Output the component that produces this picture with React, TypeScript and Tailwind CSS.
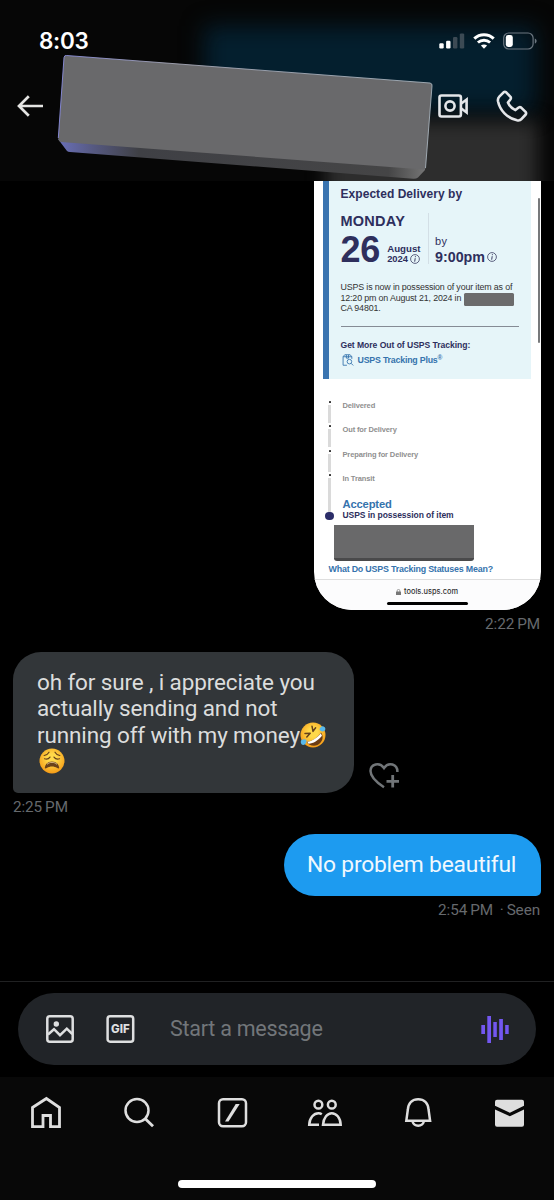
import type { ReactNode } from "react";

const STEPS = ["Delivered", "Out for Delivery", "Preparing for Delivery", "In Transit"];

function StatusBar() {
  return (
    <div className="relative flex h-[81px] items-center justify-between pl-[39px] pr-[17px]">
      <span className="font-['Inter'] text-[22.5px] leading-7 font-semibold tracking-[-0.3px] text-white">8:03</span>
      <div className="flex items-center">
        <svg className="h-4 w-[26px]" viewBox="0 0 26 16">
          <rect x="0.3" y="10.3" width="4.4" height="5.2" rx="1.2" fill="#fff" />
          <rect x="7.1" y="7.8" width="4.4" height="7.7" rx="1.2" fill="#fff" />
          <rect x="14" y="4" width="4.4" height="11.5" rx="1.2" fill="#3c4a54" />
          <rect x="20.8" y="0.4" width="4.4" height="15.1" rx="1.2" fill="#3c4a54" />
        </svg>
        <svg className="ml-2 h-4 w-[22px]" viewBox="0 0 22 16" fill="none" stroke="#fff">
          <path d="M1.3 5.6C6.8.5 15.2.5 20.7 5.6" strokeWidth="3.1" />
          <path d="M4.9 9.5C8.4 6.4 13.6 6.4 17.1 9.5" strokeWidth="2.9" />
          <path d="M11 15.8 7.9 12.6c1.8-1.6 4.4-1.6 6.2 0Z" fill="#fff" stroke="none" />
        </svg>
        <svg className="ml-[8px] h-[18px] w-[34px]" viewBox="0 0 34 18">
          <rect x="0.7" y="1" width="29.4" height="16" rx="5" fill="none" stroke="#6c7780" strokeWidth="1.2" />
          <rect x="2.8" y="3.1" width="7" height="11.8" rx="2.4" fill="#fff" />
          <path d="M31.8 6.4c2.4.9 2.4 4.3 0 5.2Z" fill="#6c7780" />
        </svg>
      </div>
    </div>
  );
}

function RedactedName() {
  return (
    <svg className="absolute top-[52px] left-[54px] h-[129px] w-[382px]" viewBox="54 52 382 129">
      <defs>
        <linearGradient id="edge" x1="0" x2="1">
          <stop offset="0" stopColor="#6a70b8" />
          <stop offset="0.1" stopColor="#55587f" />
          <stop offset="0.22" stopColor="#3f4045" />
          <stop offset="0.9" stopColor="#454546" />
          <stop offset="1" stopColor="#747474" />
        </linearGradient>
        <linearGradient id="rim" x1="0" x2="1">
          <stop offset="0" stopColor="#8a8de0" />
          <stop offset="0.3" stopColor="#a3a5b4" />
          <stop offset="1" stopColor="#a7b2bb" />
        </linearGradient>
      </defs>
      <path d="M58 139 67 151Q68 152 70 152L413 178.7Q416 179 418 177.5L425 170 425 160Z" fill="url(#edge)" />
      <path d="M66.5 55.5 430 83Q432.5 83.5 432 86L425.5 168.5Q425 169.8 423 169.5L61 142Q58 141 58.3 138L64 57.5Q64.5 55 66.5 55.5Z" fill="#69696b" />
      <path d="M58.3 138 64 57.5Q64.5 55 66.5 55.5L430 83Q432.5 83.5 432 86L425.5 168" fill="none" stroke="url(#rim)" strokeWidth="0.9" />
    </svg>
  );
}

function Header() {
  return (
    <header className="relative h-[181px] shrink-0 overflow-hidden bg-[#060606]">
      <div className="absolute top-[26px] left-[204px] h-[86px] w-[332px] bg-[#041f2e] blur-[11px]" />
      <div className="absolute top-[121px] left-[326px] h-[90px] w-[212px] bg-[#2d2d2d] blur-[9px]" />
      <StatusBar />
      <div className="relative flex h-[50px] items-center pr-[26px] pl-[17px]">
        <svg className="h-[22px] w-[26px]" viewBox="0 0 26 22" fill="none" stroke="#e4e4e2" strokeWidth="2.7">
          <path d="M26 11H2.5M11.8 1.2 2 11l9.8 9.8" />
        </svg>
        <svg className="ml-auto h-6 w-[30px]" viewBox="0 0 30 24" fill="none" stroke="#e4e6e9" strokeWidth="2.6">
          <rect x="1.5" y="1.5" width="21.4" height="21" rx="2" />
          <circle cx="12" cy="12" r="4.6" />
          <path d="M23 9.7 28.6 5.5v13L23 14.3" />
        </svg>
        <svg className="ml-[28px] h-[32px] w-[32px]" viewBox="0 0 32 32" fill="none" stroke="#e4e6e9" strokeWidth="2.6" strokeLinejoin="round">
          <path d="M3.3 6.7 7.8 2.2Q9 1.4 10.2 2.3L14.5 6.8Q15.3 8 14.5 9.2L11.9 12.6C13.5 16.3 15.7 18.5 19.4 20.1L22.7 17.5Q24 16.7 25.2 17.6L29.8 22.1Q30.5 23.3 29.7 24.5L25.4 29.2C24.3 30.5 22.5 30.6 21 30.3 11 28 4 20.5 2 11.2 1.7 9.5 2 8 3.3 6.7Z" />
        </svg>
      </div>
      <RedactedName />
    </header>
  );
}

function Info() {
  return (
    <svg className="inline-block h-[10px] w-[10px] shrink-0" viewBox="0 0 10 10" fill="none" stroke="#3b3d62">
      <circle cx="5" cy="5" r="4.4" strokeWidth="0.8" />
      <path d="M5.4 2.2v1M5.2 4.2 4.7 7.7" strokeWidth="1" />
    </svg>
  );
}

function TrackingCard() {
  return (
    <div className="mr-[13.5px] flex h-[429px] w-[227px] flex-col self-end overflow-hidden rounded-b-[38px] bg-white font-['Liberation_Sans',sans-serif] whitespace-nowrap text-[#2e2f5d]">
      <div className="flex h-[197.5px] shrink-0">
        <div className="ml-[9px] flex-1 border-l-[6px] border-[#3a74b0] bg-[#e6f5f9] pt-[5px] pl-[12px]">
          <div className="text-[12px] leading-4 font-bold tracking-[0.05px]">Expected Delivery by</div>
          <div className="mt-[11px] flex h-[51px]">
            <div className="w-[88.5px] border-r border-[#d3dfe6]">
              <div className="text-[14.5px] leading-4 font-bold tracking-[0.25px]">MONDAY</div>
              <div className="mt-[5px] flex items-end">
                <span className="text-[36px] leading-8 font-bold tracking-[-0.2px]">26</span>
                <div className="ml-[7px] pb-[2.4px] text-[9.7px] leading-[10px] font-bold">
                  <div>August</div>
                  <div className="flex gap-[2px] text-[9.4px]">2024<Info /></div>
                </div>
              </div>
            </div>
            <div className="pt-[22px] pl-[6px]">
              <div className="text-[11px] leading-3 tracking-[0.3px]">by</div>
              <div className="mt-[1px] flex items-center gap-[2px] text-[14.3px] leading-[18px] font-bold">9:00pm<Info /></div>
            </div>
          </div>
          <div className="mt-[18.3px] text-[8.9px] leading-[10.3px] tracking-[-0.155px] text-[#333]">
            <div>USPS is now in possession of your item as of</div>
            <div className="flex">12:20 pm on August 21, 2024 in<span className="ml-[3px] h-[13px] w-[50px] rounded-[1.5px] bg-[#6b6b6c]" /></div>
            <div className="-mt-[2.7px]">CA 94801.</div>
          </div>
          <div className="mt-[12.5px] h-px w-[178.5px] bg-[#858b95]" />
          <div className="mt-[12.5px] text-[8.6px] leading-3 font-bold tracking-[-0.05px]">Get More Out of USPS Tracking:</div>
          <div className="mt-[3px] flex items-center text-[8.8px] leading-3 font-bold tracking-[-0.2px] text-[#3573ad]">
            <svg className="mr-[4px] ml-[1px] h-[12px] w-[12px]" viewBox="0 0 11 11" fill="none" stroke="#3573ad" strokeWidth="0.8">
              <path d="M4.5 10.3H1V2.5L2.5.7h5L9 2.5v2M1 2.5h8M4 .8v3h2v-3" />
              <circle cx="6.8" cy="7" r="2.1" />
              <path d="m8.3 8.5 2 2" />
            </svg>
            USPS Tracking Plus<span className="-mt-[4px] text-[6.5px]">®</span>
          </div>
        </div>
        <div className="w-[9.5px] pt-[17px] pl-[6.5px]">
          <div className="h-[145px] w-[2px] rounded-full bg-[#77797b]" />
        </div>
      </div>

      <div className="mt-[21.5px] pl-[14.5px] text-[7.5px] font-bold tracking-[-0.13px] text-[#8f8f8f]">
        {STEPS.map((step, i) => (
          <div key={step} className="flex h-[24.3px]">
            <div className="flex w-[14.5px] flex-col">
              <span className="mt-[1px] ml-px h-[2px] w-[2px] shrink-0 rounded-[0.5px] bg-[#333]" />
              <span className={i === 3 ? "mt-[2px] h-[36px] w-[3px] shrink-0 bg-[#dadada]" : "mt-[2px] h-[18px] w-[3px] bg-[#dadada]"} />
            </div>
            <span className="leading-3">{step}</span>
          </div>
        ))}
      </div>
      <div className="mt-[1px] pl-[29px] text-[11.2px] leading-3 font-bold tracking-[-0.15px] text-[#3573ad]">Accepted</div>
      <div className="flex h-[11px] items-center pl-[11.5px] text-[8.5px] leading-[11px] font-bold tracking-[-0.05px]">
        <span className="mt-[1px] mr-[9px] h-[8.5px] w-[8.5px] rounded-full bg-[#2b2d68]" />
        USPS in possession of item
      </div>
      <div className="mt-[3.5px] ml-[20.5px] h-[36.5px] w-[140px] shrink-0 rounded-b-[3px] border-b-[3px] border-[#4a4a4b] bg-[#69696a]" />
      <div className="mt-[2px] pl-[15px] text-[8.9px] leading-3 font-bold tracking-[-0.2px] text-[#3573ad]">What Do USPS Tracking Statuses Mean?</div>
      <div className="mt-auto flex h-[31px] shrink-0 flex-col items-center border-t border-[#dedede] bg-[#fcfcfd] pt-[5px] text-[#333]">
        <div className="flex items-center font-['Inter'] text-[7.4px] leading-[14px] font-medium">
          <svg className="mr-[3px] h-[6px] w-[5px]" viewBox="0 0 5 6">
            <rect y="2.5" width="5" height="3.5" rx="0.6" fill="#777" />
            <path d="M1.2 3V1.7a1.3 1.3 0 0 1 2.6 0V3" fill="none" stroke="#777" strokeWidth="0.7" />
          </svg>
          tools.usps.com
        </div>
        <div className="mt-[3px] h-[3px] w-[81px] rounded-full bg-black" />
      </div>
    </div>
  );
}

function Face({ children }: { children: ReactNode }) {
  return (
    <svg className="inline-block h-[26px] w-[26px] align-[-5px]" viewBox="0 0 26 26">
      <defs>
        <radialGradient id="face" cx="0.5" cy="0.4" r="0.6">
          <stop offset="0.3" stopColor="#ffd94a" />
          <stop offset="1" stopColor="#f59b16" />
        </radialGradient>
      </defs>
      {children}
    </svg>
  );
}

function Rofl() {
  return (
    <Face>
      <circle cx="13" cy="13" r="12.5" fill="url(#face)" />
      <path d="M6.5 19.7C12 19.5 18 15.5 21 10.5 24.5 15 22 21 17.5 23 13.5 24.7 8.5 23.3 6.5 19.7Z" fill="#6b3c14" />
      <path d="M7.2 19.7C12 19.3 17.5 15.7 20.7 11.2l1.3 2.5C18 18.5 13.5 21.5 8.5 21.7Z" fill="#fff" />
      <path d="m5 11.5 5.2-.3-3.4 3.7M12 4.2l1 5.2 2.6-3.6" fill="none" stroke="#65401b" strokeWidth="1.5" strokeLinecap="round" strokeLinejoin="round" />
      <path d="M1.2 18.2c2-1.2 4-1.3 5.2.1.2 2.7-1 4.7-3.2 4.6C1 22.7.2 20 1.2 18.2ZM19.5 7.5c.4-2 2-3.5 4-3.1 2.2.6 2.4 3 1 4.4-1.6 1.2-4 .6-5-1.3Z" fill="#58b8ea" />
    </Face>
  );
}

function Weary() {
  return (
    <Face>
      <circle cx="13" cy="13" r="12.5" fill="url(#face)" />
      <path d="M5.2 7.5C7.5 7 9 6 10 4.2M20.8 7.5C18.5 7 17 6 16 4.2M5.5 10.8c2.2.8 4.2.2 5.5-1.7M20.5 10.8c-2.2.8-4.2.2-5.5-1.7" fill="none" stroke="#65401b" strokeWidth="1.2" strokeLinecap="round" />
      <path d="M5.8 19.7C6.5 11.5 19.5 11.5 20.2 19.7 20.3 21 19 20.5 18.2 20 15 18 11 18 7.8 20 7 20.5 5.7 21 5.8 19.7Z" fill="#6b431a" />
      <path d="M8 16.3c3-2.6 7-2.6 10 0" fill="none" stroke="#d9b987" strokeWidth="1" />
    </Face>
  );
}

function Composer() {
  return (
    <div className="mt-auto h-[96px] shrink-0 border-t border-[#202122] pt-[11px] pr-[18px] pl-[18px]">
      <div className="flex h-[72px] items-center rounded-full bg-[#212428] pr-[27px] pl-[28px]">
        <svg className="h-7 w-7" viewBox="0 0 28 28" fill="none" stroke="#dedfe0" strokeWidth="2.5">
          <rect x="1.3" y="1.3" width="25.4" height="25.4" rx="2.5" />
          <circle cx="10.3" cy="9" r="2.7" fill="#dedfe0" stroke="none" />
          <path d="m2 19.500 6-5.300 6 6 6.800-6.500 5.500 5.300" />
        </svg>
        <svg className="ml-[32px] h-7 w-[29px]" viewBox="0 0 29 28">
          <rect x="1.6" y="1.3" width="25.6" height="25.4" rx="2.5" fill="none" stroke="#dedfe0" strokeWidth="2.5" />
          <text x="14.4" y="18" textAnchor="middle" className="font-['Inter'] text-[11.5px] font-extrabold" fill="#dedfe0">GIF</text>
        </svg>
        <span className="ml-[35px] font-['Roboto',sans-serif] text-[21.5px] leading-7 tracking-[-0.25px] text-[#72767a]">Start a message</span>
        <svg className="ml-auto h-[27px] w-[28px]" viewBox="0 0 28 27" fill="#7357f0">
          <rect x="0.3" y="9" width="3.7" height="9" />
          <rect x="6.3" y="0" width="3.7" height="27" />
          <rect x="12.3" y="6" width="3.5" height="15" />
          <rect x="18.2" y="3" width="3.7" height="21" />
          <rect x="24.2" y="9" width="3.5" height="9" />
        </svg>
      </div>
    </div>
  );
}

function TabBar() {
  return (
    <nav className="flex h-[123px] shrink-0 flex-col justify-between bg-[#080808] pb-[12px]">
      <div className="flex h-[71px] items-center pr-[28px] pl-[30px]">
        <svg className="h-[33px] w-8" viewBox="0 0 32 33" fill="none" stroke="#dedede" strokeWidth="2.8">
          <path d="M2.5 11.5 16.4 2.5 29.5 11.500V30.700H20.500V19.500H13V30.700H2.500Z" />
        </svg>
        <svg className="ml-[62px] h-[33px] w-8" viewBox="0 0 32 33" fill="none" stroke="#dedede" strokeWidth="2.5">
          <circle cx="13" cy="14.5" r="11.5" />
          <path d="m21 22.5 8 7.7" strokeWidth="2.9" />
        </svg>
        <svg className="ml-[60px] h-[33px] w-8" viewBox="0 0 32 33" fill="none" stroke="#dedede" strokeWidth="2.5">
          <rect x="3" y="3.3" width="27" height="27" rx="4" />
          <path d="M9 25.5 19.700 8h4L12.500 25.500Z" fill="#dedede" stroke="none" />
        </svg>
        <svg className="ml-[58px] h-[33px] w-9" viewBox="0 0 36 33" fill="none" stroke="#dedede" strokeWidth="2.5">
          <circle cx="12.4" cy="8.7" r="3.9" />
          <circle cx="25.8" cy="8.7" r="3.9" />
          <path d="M13 28.8H3.200C3.500 21.500 8 17.200 12.500 17.200c1.300 0 2.400.4 3.300 1M17 28.800C17.500 21.500 21.500 17.200 25.800 17.200S34.500 21.500 34.700 28.800Z" />
        </svg>
        <svg className="ml-[60px] h-[33px] w-8" viewBox="0 0 32 33" fill="none" stroke="#dedede" strokeWidth="2.5">
          <path d="M4.300 24.800 5.800 14C6.200 7 10.500 3.200 16.200 3.200S26.200 7 26.600 14l1.500 10.800Z" />
          <path d="M10.500 25.500c1.700 5.500 9.700 5.500 11.400 0" />
        </svg>
        <svg className="ml-auto h-[33px] w-8" viewBox="0 0 32 33" fill="#dedede">
          <path d="M3 3.700h25q2 0 2 2V9.700L15.900 16.800 1 9.700V5.700q0-2 2-2ZM1 13.500 15.900 20.300 30 13.500V28.700q0 2-2 2H3q-2 0-2-2Z" />
        </svg>
      </div>
      <div className="h-2 w-[198px] self-center rounded-full bg-white" />
    </nav>
  );
}

export default function App() {
  return (
    <div className="flex h-[1200px] w-[554px] flex-col overflow-hidden bg-black font-['Roboto',sans-serif]">
      <Header />
      <main className="flex flex-col">
        <TrackingCard />
        <div className="mt-[4px] mr-[14px] self-end text-[15.3px] leading-5 tracking-[-0.1px] text-[#66696d]">2:22&#8201;PM</div>

        <div className="mt-[17.5px] ml-[13px] flex items-end">
          <div className="h-[141.5px] w-[341px] rounded-[28px] rounded-bl-[5px] bg-[#323639] pt-[17px] pl-[24px] text-[22.5px] leading-[26.6px] tracking-[-0.13px] whitespace-nowrap text-[#dcdddd]">
            <div>oh for sure , i appreciate you</div>
            <div>actually sending and not</div>
            <div className="h-[26.6px]">running off with my money<Rofl /></div>
            <div className="h-[26.6px] pl-[2px]"><Weary /></div>
          </div>
          <svg className="mb-[3px] ml-[14px] h-[28px] w-[32px]" viewBox="0 0 32 28" fill="none" stroke="#717578" strokeWidth="2.5">
            <path d="M16 25.2C8 20 2.500 15 2.500 9 2.500 2 11.500-.5 16 6c4.500-6.500 13.600-4 13.400 4" />
            <path d="M24.700 13v12.500M18.500 19.300H31" strokeWidth="2.8" />
          </svg>
        </div>
        <div className="mt-[4px] ml-[13px] text-[15.3px] leading-5 tracking-[-0.1px] text-[#66696d]">2:25&#8201;PM</div>

        <div className="mt-[17px] mr-[13.5px] flex h-[62px] w-[257px] items-center self-end rounded-[31px] rounded-br-[5px] bg-[#1d9bf0] pt-[1px] pl-[23.5px] text-[22.8px] tracking-[-0.2px] whitespace-nowrap text-[#f0f8fe]">
          No problem beautiful
        </div>
        <div className="mt-[4px] mr-[14px] self-end text-[15.3px] leading-5 tracking-[-0.1px] text-[#66696d]">2:54&#8201;PM&#8201; ·&#8201;Seen</div>
      </main>
      <Composer />
      <TabBar />
    </div>
  );
}
